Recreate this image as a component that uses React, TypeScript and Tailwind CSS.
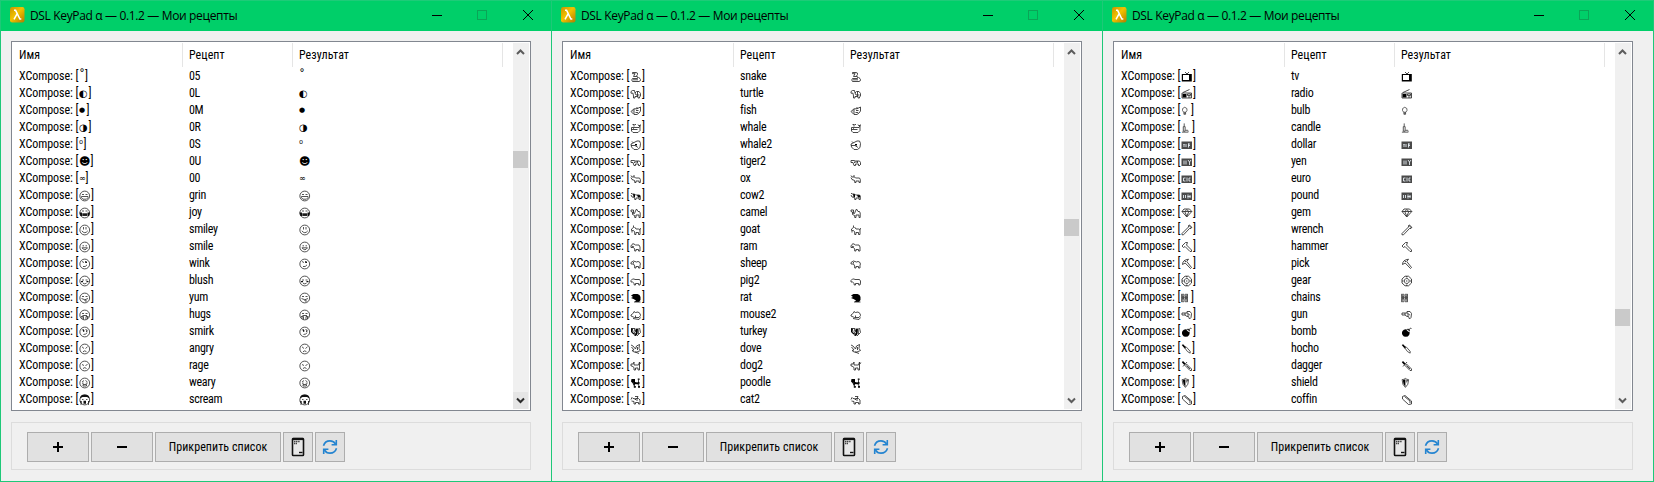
import React from "react";

type Row = { glyph: string; recipe: string; cell?: string; font?: string };

type Win = { rows: Row[]; thumb: string; downHover?: boolean };

const W12 = "w-3";
const W11 = "w-[11px]";
const W10 = "w-[10px]";

const windows: Win[] = [
  {
    thumb: "mt-[108px]",
    downHover: true,
    rows: [
      { glyph: "˚", recipe: "05", cell: "w-[6px]", font: "text-[12px]" },
      { glyph: "◐", recipe: "0L", cell: "w-[9.5px]", font: "text-[10px]" },
      { glyph: "●", recipe: "0M", cell: "w-[7.5px]", font: "text-[7px]" },
      { glyph: "◑", recipe: "0R", cell: "w-[9.5px]", font: "text-[10px]" },
      { glyph: "⁰", recipe: "0S", cell: "w-[4.5px]", font: "text-[10px]" },
      { glyph: "☻", recipe: "0U", cell: "w-[11.5px]", font: "text-[11px]" },
      { glyph: "∞", recipe: "00", cell: "w-[6.5px]", font: "text-[8px]" },
      { glyph: "😀", recipe: "grin" },
      { glyph: "😂", recipe: "joy" },
      { glyph: "😃", recipe: "smiley" },
      { glyph: "😄", recipe: "smile" },
      { glyph: "😉", recipe: "wink" },
      { glyph: "😊", recipe: "blush" },
      { glyph: "😋", recipe: "yum" },
      { glyph: "🤗", recipe: "hugs" },
      { glyph: "😏", recipe: "smirk" },
      { glyph: "😠", recipe: "angry" },
      { glyph: "😡", recipe: "rage" },
      { glyph: "😩", recipe: "weary" },
      { glyph: "😱", recipe: "scream" },
    ],
  },
  {
    thumb: "mt-[176px]",
    rows: [
      { glyph: "🐍", recipe: "snake" },
      { glyph: "🐢", recipe: "turtle" },
      { glyph: "🐟", recipe: "fish" },
      { glyph: "🐳", recipe: "whale" },
      { glyph: "🐋", recipe: "whale2" },
      { glyph: "🐅", recipe: "tiger2" },
      { glyph: "🐂", recipe: "ox" },
      { glyph: "🐄", recipe: "cow2" },
      { glyph: "🐪", recipe: "camel" },
      { glyph: "🐐", recipe: "goat" },
      { glyph: "🐏", recipe: "ram" },
      { glyph: "🐑", recipe: "sheep" },
      { glyph: "🐖", recipe: "pig2" },
      { glyph: "🐀", recipe: "rat" },
      { glyph: "🐁", recipe: "mouse2" },
      { glyph: "🦃", recipe: "turkey" },
      { glyph: "🕊", recipe: "dove" },
      { glyph: "🐕", recipe: "dog2" },
      { glyph: "🐩", recipe: "poodle" },
      { glyph: "🐈", recipe: "cat2" },
    ],
  },
  {
    thumb: "mt-[266px]",
    rows: [
      { glyph: "📺", recipe: "tv" },
      { glyph: "📻", recipe: "radio" },
      { glyph: "💡", recipe: "bulb", cell: W10 },
      { glyph: "🕯", recipe: "candle", cell: W11 },
      { glyph: "💵", recipe: "dollar" },
      { glyph: "💴", recipe: "yen" },
      { glyph: "💶", recipe: "euro" },
      { glyph: "💷", recipe: "pound" },
      { glyph: "💎", recipe: "gem" },
      { glyph: "🔧", recipe: "wrench" },
      { glyph: "🔨", recipe: "hammer" },
      { glyph: "⛏", recipe: "pick" },
      { glyph: "⚙", recipe: "gear" },
      { glyph: "⛓", recipe: "chains", cell: W10 },
      { glyph: "🔫", recipe: "gun" },
      { glyph: "💣", recipe: "bomb" },
      { glyph: "🔪", recipe: "hocho", cell: W11 },
      { glyph: "🗡", recipe: "dagger" },
      { glyph: "🛡", recipe: "shield", cell: W11 },
      { glyph: "⚰", recipe: "coffin" },
    ],
  },
];

/* Stroked drawing on a 12 x 12 grid, with an optional solid part. */
function Line({ d, solid }: { d: string; solid?: string }) {
  return (
    <svg viewBox="0 0 12 12" className="h-3 w-3" fill="none" stroke="#2a2a2a" strokeWidth=".85">
      {solid && <path d={solid} fill="#000" stroke="none" />}
      <path d={d} />
    </svg>
  );
}

function Face({ d, solid }: { d: string; solid?: string }) {
  return (
    <svg viewBox="0 0 12 12" className="h-3 w-3" fill="none" stroke="#2a2a2a" strokeWidth=".8">
      <circle cx="5.75" cy="6" r="4.9" />
      {solid && <path d={solid} fill="#111" stroke="none" />}
      <path d={d} />
    </svg>
  );
}

function Note({ d }: { d: string }) {
  return (
    <svg viewBox="0 0 12 12" className="h-3 w-3">
      <rect x="0.5" y="2.5" width="10.5" height="7.5" fill="#4a4a4a" />
      <path d={d} stroke="#e8eef4" strokeWidth=".9" fill="none" />
    </svg>
  );
}

const drawn: Record<string, React.ReactNode> = {
  "😀": <Face d="M3 4.500h2M6.500 4.500h2M2.500 6.500h6.500v1.200l-1.500 1.500h-3.500L2.500 7.700z" />,
  "😂": <Face d="M3 4h2M6.500 4h2M3 7h5.500M3.500 8.500h4.500" solid="M.5 5.500h2.500v3.500h-1.500zM8.500 5.500h2.500l-1 3.500h-1.500zM3.500 6.500h4.500v2.500h-4.500z" />,
  "😃": <Face d="M4.500 3v2.500M7 3v2.500M2.800 6.800q3 3.800 6 0" />,
  "😄": <Face d="M3.500 4.800h1.500M6.500 4.800h1.500M3 6.800h5.500q-2.700 3.800-5.500 0" />,
  "😉": <Face d="M3 3.500l2 1M6.500 3v2M4 8.500q2.500.8 4-1.700" solid="M6.500 3.500h1.500v1.500H6.500z" />,
  "😊": <Face d="M3 5h2M6.500 5h2M4 8.200q1.700 1.300 3.500 0" solid="M2 6h2v1.200H2zM7.500 6h2v1.200h-2z" />,
  "😋": <Face d="M3 4.500h2M6.500 4.500h2M2.500 6.500q3.300 2.500 6.500 0M6 7.500v1.500h2" />,
  "🤗": <Face d="M3 4.500h2M6.500 4.500h2M3.500 6.500h4.500M2 7.500h2.500v3M9.500 7.500H7v3M3 8v2M8.500 8v2" />,
  "😏": <Face d="M2.800 4l2.200-.5M6.500 3.500l2 .8M4.500 8.500q2.500 0 3.800-2" solid="M4 4h1.300v1.700H4zM7 4.500h1.300v1.300H7z" />,
  "😠": <Face d="M3 3.800l2 1.700M8.500 3.800l-2 1.700M4 8.800q1.800-2 3.500 0" />,
  "😡": <Face d="M3 4.500l2 1M8.500 4.500l-2 1M4 8.500q1.800-1.800 3.500 0" />,
  "😩": <Face d="M3 5l2-1.500M8.500 5l-2-1.500M3 6.200h1.700M6.800 6.200h1.700M4 9V7.500h3.500V9z" />,
  "😱": <Face d="M3 5.500h1.500M7 5.500h1.500M2 7v4M9.500 7v4" solid="M1 4.500q0-4 4.700-4t4.800 4L8 3H3.500zM4.500 6.800h2.500v3H4.500zM1 7h1.500v3.500zM9 7h1.500L9 10.500z" />,
  "🐍": <Line d="M2.500 1.500h3.500q2 0 1.500 2l-1 1.500M2.500 1.500v1.200h2.700M5 2.700 3.500 5.500H7q1.500 0 .5 2H2.500q-1.500 1.500 0 3H9q1.700-.2 1.500-2L8.500 6M3 8.800h5" />,
  "🐢": <Line d="M1 3.500 2.500 2.500h2L5 5l1.500-1.500H9l1.500 2v3M1 3.500v1.700h2L3.500 8v2h1.500V8.500h3V10h1.500V8.500M5 5l1 2h3.500M7.500 3.500v5" />,
  "🐟": <Line d="M1 6.500 4 3.800h3L10.500 2v4l-1.500 2-2 1.500H4zM4 4v5M6 5.500h2.500M5.500 7.500H8M7 2v2M2.500 6h.8" />,
  "🐳": <Line d="M1.500 5.500h7.500L10.500 3M1.500 5.500v3.500l1.500 1.500h5l2-2V3.500M4 4.500V2.500H2.500M4.500 2.500H6M8 2.500l1 1.500 1.500-1.500M1.500 7.500h6M3 6.500h.8" />,
  "🐋": <Line d="M1 5 4 3.500 7 2h2.500l1 2.500-.5 4-2.500 2H4L1.500 8zM1 6.500h4L8 8.500M2 2.500 3.500 4" solid="M5 5h2v1.500H5z" />,
  "🐅": <Line d="M1 4.500h3.500l1 .5h4l1 1.500V9M1 4.500v2h2l1 3h1.500V8h3v1.500H10M6 5v2M7.500 5v2M4.500 5.500v1.500" />,
  "🐂": <Line d="M1 2.500l1 1.500h2.500L5.500 5h4l.8 1.500V9.500H9V8H6v1.500H4.700V7.500L2 6.500 1 4.500M4 4V2" />,
  "🐄": <Line d="M1 3l1 1h2.500L5.500 5h4l.8 1V9.500H9V8H6v1.500H4.700V7.500L2 7 1 5" solid="M3 4h2v3H3.500zM7 5h3v2.500H8z" />,
  "🐪": <Line d="M1 3h2.500v3.500h1L5.500 4l1-2 1.500 2.500h1.500l.7 1.500v4.500H9V8H6v2.500H4.700V8.500L2.500 7.500V5L1 4.500z" />,
  "🐐": <Line d="M3.500 1.500v2L1.500 5v1.500h2L4.700 8v2.500H6V8.500h2.500v2H10V6L8.500 5H6L4.500 3M10.500 4 10 6M2 7v1.500" />,
  "🐏": <Line d="M4 3a1.500 1.500 0 1 0 .1 2.500M1 4.500v2h2.500L4.700 8v2H6V8.500h2.500V10H10V6L9 4H5.500L4 3" />,
  "🐑": <Line d="M1 4.500v1.500h2.500L4.700 8v2H6V8.500h2.500V10H10V7l.5-1-1-2-1.500-.5-1.500.5-1.500-.5L3.500 3 1 4.500M3.500 4v1.500" />,
  "🐖": <Line d="M1 5.500 2.500 4H4l1 .5h4.500l1 1.500v2l-.5 2H8.700V8.500H5.500V10H4.200V8.500L2.500 7H1z" />,
  "🐀": <Line d="M4 10h6.500" solid="M1 3.500 3.500 2h4l2 1 1 2v3L9 10H4.500L6 8.500 3.500 7 1 6l2-1z" />,
  "🐁": <Line d="M1 6 3.500 4l.5-1.500 1.500 1L8 3l2 1.500.5 2L9 8.500H4.500L1 7zM3 9.500l6 1 1.500-2M5.500 6.500v2" />,
  "🦃": <Line d="M2 2.500h3l-1 3 1.500 4M8 2l.5 6M9.500 2l1 4.500L7 10" solid="M1 2l2 .5L2.500 6l2 1.500V10h1.500L7.500 8 8 3 6 2.500 5 5 6 7 3.500 8.500 1 6z" />,
  "🕊": <Line d="M1 2l2 1 2.500 3 1-3 3-1.500L9 5.500l1.500 2L7 9H4L2 7.500 4 7 1.500 4M7.500 4v3M5 9l4 1.500" />,
  "🐕": <Line d="M1 4h2l1-2v3h4.500l1-3v8H8V8H5.500v2H4V7.500L2 6H1zM10 4l.8-1.500" />,
  "🐩": <Line d="M3 5l2 5M8.500 6.500 9 10M8.500 5V2" solid="M1.500 2h3.500v3l2.500.5 1-1L10 6 8.500 7.500 5.500 7 4 9 2.500 6 1 4.500zM7.800 1.500h1.700V3H7.800zM3.800 9h2v1.700h-2zM8 9h2v1.700H8z" />,
  "🐈": <Line d="M1 5.500 2 3.500l1 1h1.500L5.500 6V4.500h3L10 6v4H8.500V8.500h-3V10H4V7.500L1.500 7M7 4.500l1-2h-3M7 5v2" />,
  "📺": <Line d="M4 1l2 2M8 1 6 3" solid="M.8 3h10v7.500H.8zM2 4v5h6V4z" />,
  "📻": <Line d="M1 5h9.500v5H1zM2 4.500 8.500 1.500M6.500 6h3v1.500h-3zM7 9h2.500" solid="M1.500 6h4v3.500h-4z" />,
  "💡": <Line d="M3.200 7.500Q1 5.500 2 3q2.500-3 5 0 1 2.500-1.200 4.500zM3.500 7.500v2.500h2V7.500M3.500 8.800h2" />,
  "🕯": <Line d="M3.500 1v3M2.500 4.500h2v5h-2zM1 10.500h7M5 8.500h2q1 0 .8 1.500" />,
  "💵": <Note d="M3 5v3M2.500 5.500h1M5 5v3M7.500 4.500v4M7 5h2M7 6.500h2" />,
  "💴": <Note d="M3 4.500v4M5 4.500v4M7 4l1.500 2L10 4M8.500 6v3" />,
  "💶": <Note d="M4.500 5h-2v3h2M6 4.500v4M9.500 5h-1.500v3h1.500" />,
  "💷": <Note d="M2.500 5v3M4.500 5v3M7 4.500v4M6.500 6.500h3M9 5v3" />,
  "💎": <Line d="M3 2h5.500l2.300 2.500-5 5.500L1 4.500zM1 4.500h9.800M3.800 4.500l2 5 2-5L5.800 2.500z" />,
  "🔧": <Line d="M1 9.500 7.500 3V1.500L9 1v2h2L10 4.500H8.500L2.500 10.800H1z" />,
  "🔨": <Line d="M1 5 4.500 1.500h2L5.500 4l5 5v1.500H9L4 5.500 2.500 6.500z" />,
  "⛏": <Line d="M1.500 6.500Q1.500 2 7.500 1.200L5.800 3.500l4.700 6-1 1L4.200 5zM3.500 2.500 5 4" />,
  "⚙": <Line d="M4 1.200h3.500L10.500 4v4L7.500 10.800H4L1 8V4zM5.750 3.500a2.500 2.500 0 1 0 .01 0M5.750 5.300v1.400M5.750 1v1.500M5.750 9.500V11M1 6h1.500M9 6h1.500" />,
  "⛓": <Line d="M1.500 1.500h2v3h-2zM5 1.500h2v3H5zM1.500 6.500h2v4h-2zM5 6.500h2v4H5zM2.500 3v5M6 3v5M.7 5.500H8M.7 1v10M7.800 1v10" />,
  "🔫": <Line d="M1 4h5V2.500h3l1.500 2-.5 4-1.500 1.500-1-2.500H6L4 6H1zM6 4l2.500 1.500M6 6h2.500M4 4v2" />,
  "💣": <Line d="M8 4l1.500-2 1 .5" solid="M4.800 3.200a3.800 3.800 0 1 0 .01 0M7 2.500l2 2-1.500 1.500-2-2z" />,
  "🔪": <Line d="M4 4.500 5.500 3.500l4.500 5v2q-3-.5-6-6z" solid="M.8 1.500l1.500-.8L5.500 4 4 5.500z" />,
  "🗡": <Line d="M4 5.500 5.500 4l5 5v1.500H9zM2 6.500l4-4.500M5.500 5.500 9 9" solid="M.8 2.200 2 1l2.500 2.500L3.300 5z" />,
  "🛡": <Line d="M1.200 2.300Q3.500 2.300 4.800 1q1.500 1.300 3.500 1.300 0 6-3.500 8.500-3.600-2.500-3.600-8.500z" solid="M4.800 2v8Q2 7 2 3zM6 2.500l1.500.5L6 6z" />,
  "⚰": <Line d="M1.500 2.500 4 1.500l6.500 5.500v3l-3 .5L1.500 5zM3.500 2.500 9 7v2" />,
};

function Glyph({ row }: { row: Row }) {
  const art = drawn[row.glyph];
  return (
    <span
      className={`flex h-[17px] shrink-0 items-center overflow-visible whitespace-nowrap font-['DejaVu_Sans',sans-serif] font-stretch-normal tracking-normal ${row.cell ?? W12} ${row.font ?? "text-[10px]"}`}
    >
      {art ?? row.glyph}
    </span>
  );
}

function Caption() {
  return (
    <div className="flex h-[31px] items-start border-t border-[#1ecb78] bg-[#00cf69] pl-[9px]">
      <svg viewBox="0 0 15 16" className="mt-[6px] h-4 w-[15px]">
        <defs>
          <linearGradient id="gold" x1="0" y1="0" x2="1" y2="1">
            <stop offset="0" stopColor="#c99200" />
            <stop offset=".45" stopColor="#f2c200" />
            <stop offset="1" stopColor="#b07a00" />
          </linearGradient>
        </defs>
        <rect x="0" y="0" width="14.5" height="15.5" rx="2.2" fill="url(#gold)" />
        <path d="M4 3.300h1.600l4.300 8.700h1.400M7.200 6.600 4 12.300" fill="none" stroke="#fff" strokeWidth="1.500" />
      </svg>
      <span className="ml-[5px] h-[30px] flex-1 whitespace-nowrap font-['Open_Sans',sans-serif] text-[12px] leading-[30px] tracking-[-0.35px] text-black font-stretch-normal">
        DSL KeyPad α — 0.1.2 — Мои рецепты
      </span>
      <svg viewBox="0 0 138 30" className="h-[30px] w-[138px]" fill="none" shapeRendering="crispEdges">
        <path d="M19 14.500h10" stroke="#000" />
        <rect x="64.500" y="9.500" width="9" height="9" stroke="#0aa557" />
        <path d="m110 9 10 10m0-10-10 10" stroke="#000" shapeRendering="auto" />
      </svg>
    </div>
  );
}

function ScrollBar({ thumb, downHover }: { thumb: string; downHover?: boolean }) {
  return (
    <div className="flex h-[366px] w-4 flex-col bg-[#f0f0f0]">
      <div className="h-0">
        <svg viewBox="0 0 15 17" className="h-[17px] w-[15px]" fill="none" stroke="#5c5c5c" strokeWidth="2">
          <path d="m4 11 3.500-3.500L11 11" />
        </svg>
      </div>
      <div className={`h-[17px] w-[15px] shrink-0 bg-[#cacaca] ${thumb}`} />
      <div className={`mt-auto h-[17px] w-[15px] ${downHover ? "bg-[#e5e5e5]" : ""}`}>
        <svg
          viewBox="0 0 15 17"
          className={`h-[17px] w-[15px] ${downHover ? "stroke-[#2b2b2b]" : "stroke-[#5c5c5c]"}`}
          fill="none"
          strokeWidth="2"
        >
          <path d="m4 6.500 3.500 3.500L11 6.500" />
        </svg>
      </div>
    </div>
  );
}

const btn = "flex h-[30px] items-center justify-center border border-[#adadad] bg-[#e1e1e1] text-black";

function Toolbar() {
  return (
    <div className="ml-[10px] mt-[11px] flex h-12 w-[520px] items-start gap-[2px] border border-[#dcdcdc] pl-[15px] pt-[9px]">
      <button className={`${btn} w-[62px]`}>
        <svg viewBox="0 0 12 12" className="h-3 w-3" stroke="#000" strokeWidth="2">
          <path d="M1 6h10M6 1v10" />
        </svg>
      </button>
      <button className={`${btn} w-[62px]`}>
        <svg viewBox="0 0 12 12" className="h-3 w-3" stroke="#000" strokeWidth="2">
          <path d="M1 6h10" />
        </svg>
      </button>
      <button className={`${btn} w-[126px] whitespace-nowrap tracking-[0.05px]`}>Прикрепить список</button>
      <button className={`${btn} w-[30px]`}>
        <svg viewBox="0 0 14 20" className="h-5 w-[14px]" fill="none">
          <rect x="1.500" y="1.500" width="11" height="17" rx=".8" fill="#e8e8e8" stroke="#111" strokeWidth="1.600" />
          <path d="M1.500 2h11" stroke="#111" strokeWidth="2.200" />
          <path d="M3 4.500h6M3 6.500h3" stroke="#444" strokeWidth="1.400" strokeDasharray="1.300 .5" />
          <path d="M8 15.500h3.500" stroke="#111" strokeWidth="1.400" />
        </svg>
      </button>
      <button className={`${btn} w-[30px]`}>
        <svg viewBox="0 0 16 16" className="h-4 w-4" fill="none" stroke="#2484d0" strokeWidth="1.600">
          <path d="M1.500 6.800C2.400 3.800 5 1.900 8 1.900c2.400 0 4.500 1.200 5.600 3.100M14.500 9.200c-.9 3-3.500 4.900-6.500 4.900-2.400 0-4.500-1.200-5.600-3.100" />
          <path d="M14.300 1v4.800H9.600M1.700 15v-4.800h4.700" />
        </svg>
      </button>
    </div>
  );
}

function RecipeWindow({ win }: { win: Win }) {
  return (
    <section className="h-[482px] w-[551px] shrink-0 border-b border-l border-[#1ec878] bg-[#f0f0f0]">
      <Caption />
      <div className="ml-[10px] mt-[10px] flex h-[370px] w-[520px] justify-between border border-[#828790] bg-white py-px pr-px">
        <div className="flex flex-col">
          <div className="flex h-[24px] tracking-[0.05px] text-black">
            <div className="w-[171px] border-r border-[#e5e5e5] pl-[7px] leading-[25px]">Имя</div>
            <div className="w-[110px] border-r border-[#e5e5e5] pl-[6px] leading-[25px]">Рецепт</div>
            <div className="w-[210px] border-r border-[#e5e5e5] pl-[6px] leading-[25px]">Результат</div>
          </div>
          <div className="flex flex-col pt-px">
            {win.rows.map((row) => (
              <div key={row.recipe} className="flex h-[17px] items-center leading-[17px] text-black">
                <div className="flex w-[171px] items-center pl-[7px]">
                  <span className="w-[60px] shrink-0 whitespace-pre tracking-[-0.05px]">XCompose: [</span>
                  <Glyph row={row} />
                  <span>]</span>
                </div>
                <div className="w-[110px] pl-[6px] tracking-[-0.3px]">{row.recipe}</div>
                <div className="flex pl-[6px]">
                  <Glyph row={row} />
                </div>
              </div>
            ))}
          </div>
        </div>
        <ScrollBar thumb={win.thumb} downHover={win.downHover} />
      </div>
      <Toolbar />
    </section>
  );
}

export default function App() {
  return (
    <main className="flex h-[482px] w-[1654px] overflow-hidden border-r border-[#1ec878] bg-[#f0f0f0] font-['Roboto',sans-serif] text-[12px] tracking-[-0.15px] font-stretch-[87%]">
      {windows.map((win) => (
        <RecipeWindow key={win.thumb} win={win} />
      ))}
    </main>
  );
}
